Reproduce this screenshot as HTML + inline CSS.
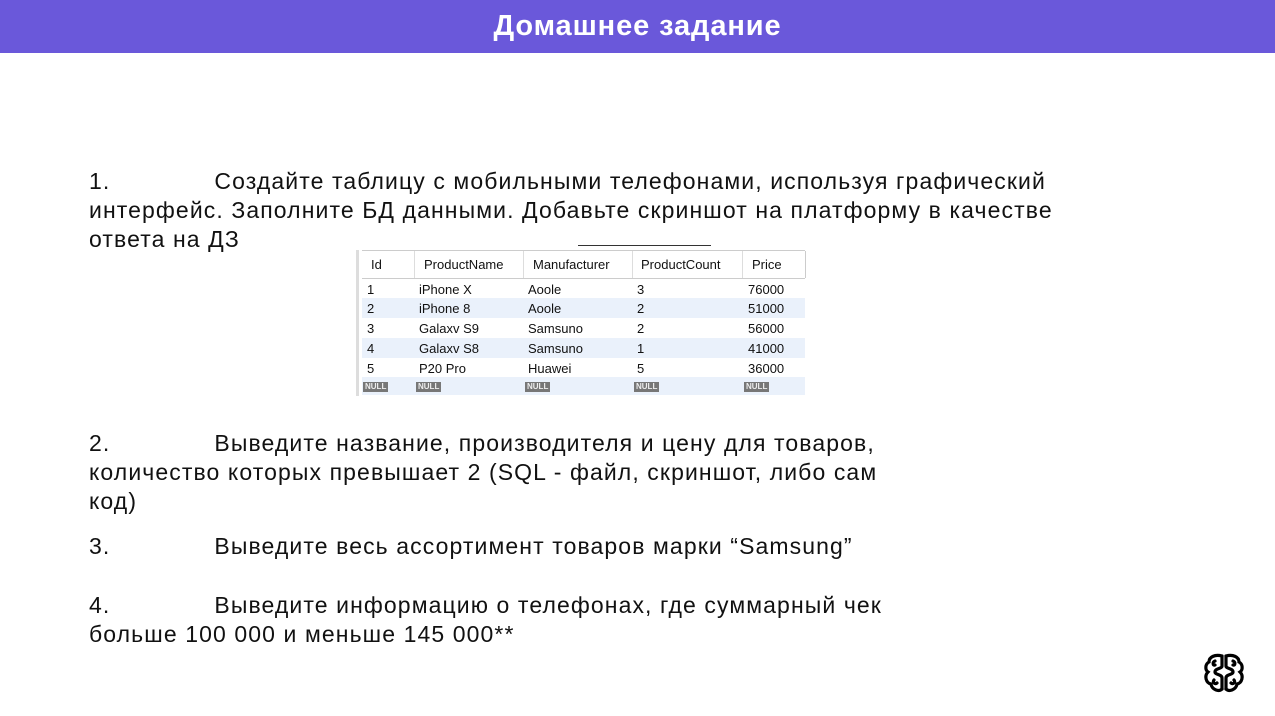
<!DOCTYPE html>
<html><head><meta charset="utf-8"><style>
body{margin:0;width:1275px;height:716px;background:#fff;position:relative;overflow:hidden;font-family:"Liberation Sans",sans-serif;}
.hdr{position:absolute;left:0;top:0;width:1275px;height:53px;background:#6a58da;color:#fff;font-weight:bold;font-size:29px;letter-spacing:0.9px;text-align:center;line-height:52px;}
.p{position:absolute;left:89px;font-size:23px;letter-spacing:1.1px;line-height:29px;color:#111;white-space:nowrap;}
.t{display:inline-block;width:104px;}
.tb{position:absolute;left:356px;top:246px;width:458px;height:150px;font-family:"Liberation Sans",sans-serif;font-size:13px;color:#111;}
.row{position:absolute;left:6px;width:443px;height:20px;}
.c{position:absolute;top:3px;}
.nl{display:inline-block;background:#777;color:#eee;font-size:8px;padding:0 2px;line-height:10px;font-weight:bold;}
</style></head><body>
<div class="hdr">Домашнее задание</div>
<div class="p" style="top:167px">1.<span class="t"></span>Создайте таблицу с мобильными телефонами, используя графический<br>интерфейс. Заполните БД данными. Добавьте скриншот на платформу в качестве<br>ответа на ДЗ</div>
<div class="tb">
<div style="position:absolute;left:222px;top:-1px;width:133px;border-top:1px solid #333"></div>
<div style="position:absolute;left:0;top:4px;width:3px;height:146px;background:#ddd"></div>
<div class="row" style="top:4px;height:27px;border-top:1px solid #ccc;border-bottom:1px solid #ccc;background:#fff">
<div style="position:absolute;left:52px;top:0;height:27px;border-left:1px solid #ddd"></div>
<div style="position:absolute;left:161px;top:0;height:27px;border-left:1px solid #ddd"></div>
<div style="position:absolute;left:270px;top:0;height:27px;border-left:1px solid #ddd"></div>
<div style="position:absolute;left:380px;top:0;height:27px;border-left:1px solid #ddd"></div>
<div style="position:absolute;left:443px;top:0;height:27px;border-left:1px solid #ccc"></div>
<span class="c" style="left:9px;top:6px">Id</span><span class="c" style="left:62px;top:6px">ProductName</span><span class="c" style="left:171px;top:6px">Manufacturer</span><span class="c" style="left:279px;top:6px">ProductCount</span><span class="c" style="left:390px;top:6px">Price</span></div>
<div class="row" style="top:33px"><span class="c" style="left:5px">1</span><span class="c" style="left:57px">iPhone X</span><span class="c" style="left:166px">Aoole</span><span class="c" style="left:275px">3</span><span class="c" style="left:386px">76000</span></div>
<div class="row" style="top:52px;background:#eaf1fb"><span class="c" style="left:5px">2</span><span class="c" style="left:57px">iPhone 8</span><span class="c" style="left:166px">Aoole</span><span class="c" style="left:275px">2</span><span class="c" style="left:386px">51000</span></div>
<div class="row" style="top:72px"><span class="c" style="left:5px">3</span><span class="c" style="left:57px">Galaxv S9</span><span class="c" style="left:166px">Samsuno</span><span class="c" style="left:275px">2</span><span class="c" style="left:386px">56000</span></div>
<div class="row" style="top:92px;background:#eaf1fb"><span class="c" style="left:5px">4</span><span class="c" style="left:57px">Galaxv S8</span><span class="c" style="left:166px">Samsuno</span><span class="c" style="left:275px">1</span><span class="c" style="left:386px">41000</span></div>
<div class="row" style="top:112px"><span class="c" style="left:5px">5</span><span class="c" style="left:57px">P20 Pro</span><span class="c" style="left:166px">Huawei</span><span class="c" style="left:275px">5</span><span class="c" style="left:386px">36000</span></div>
<div class="row" style="top:131px;height:18px;background:#eaf1fb"><span class="c" style="left:1px;top:0"><span class="nl">NULL</span></span><span class="c" style="left:54px;top:0"><span class="nl">NULL</span></span><span class="c" style="left:163px;top:0"><span class="nl">NULL</span></span><span class="c" style="left:272px;top:0"><span class="nl">NULL</span></span><span class="c" style="left:382px;top:0"><span class="nl">NULL</span></span></div>
</div>
<div class="p" style="top:429px">2.<span class="t"></span>Выведите название, производителя и цену для товаров,<br>количество которых превышает 2 (SQL - файл, скриншот, либо сам<br>код)</div>
<div class="p" style="top:532px">3.<span class="t"></span>Выведите весь ассортимент товаров марки “Samsung”</div>
<div class="p" style="top:591px">4.<span class="t"></span>Выведите информацию о телефонах, где суммарный чек<br>больше 100 000 и меньше 145 000**</div>
<svg style="position:absolute;left:1203px;top:652px" width="42" height="42" viewBox="0 0 42 42" fill="none" stroke="#000" stroke-width="3.2" stroke-linecap="round">
<path d="M19 4 C12 2 6 5 6 10 C2 12 2 18 5 20 C1 24 3 31 8 32 C9 38 16 40 19 37"/>
<path d="M23 4 C30 2 36 5 36 10 C40 12 40 18 37 20 C41 24 39 31 34 32 C33 38 26 40 23 37"/>
<path d="M19 4 V14 C19 17 12 16 12 20 C12 23 19 22 19 26 V37"/>
<path d="M23 4 V14 C23 17 30 16 30 20 C30 23 23 22 23 26 V37"/>
<path d="M12 9 C9 10 10 14 12 13"/><path d="M30 9 C33 10 32 14 30 13"/>
<path d="M11 28 C9 30 12 33 14 31"/><path d="M31 28 C33 30 30 33 28 31"/>
</svg>
</body></html>
